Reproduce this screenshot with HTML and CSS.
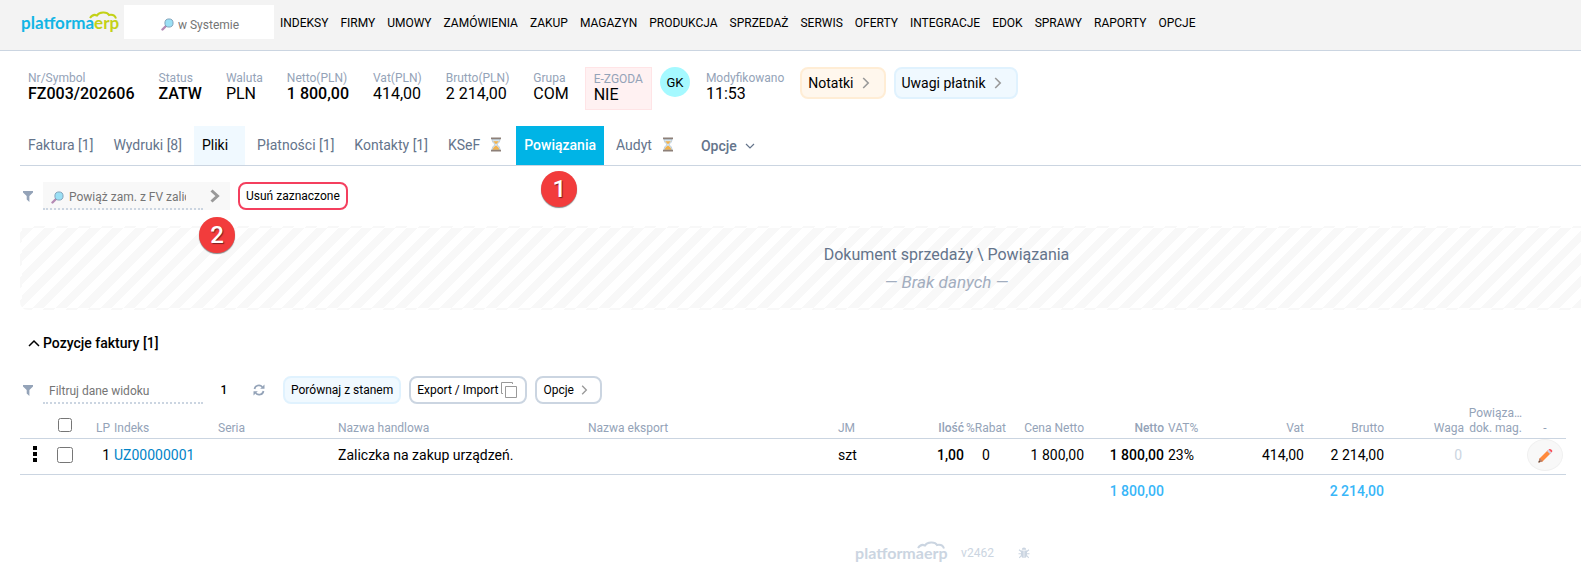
FILE: index.html
```html
<!DOCTYPE html>
<html lang="pl">
<head>
  <meta charset="utf-8">
  <title>FZ003/202606 - platformaerp</title>
  <meta name="viewport" content="width=device-width, initial-scale=1">
  <link rel="stylesheet" href="styles.css">
</head>
<body>
<!-- Shared icons -->
<svg class="sprite" aria-hidden="true">
  <symbol id="icon-search" viewBox="0 0 14 14">
    <path d="M1.6 12.4L5.4 8.6" stroke="#b48ab4" stroke-width="2.6" stroke-linecap="round"/>
    <circle cx="8.6" cy="5.4" r="4.4" fill="#9be0f5" stroke="#7d9fb8" stroke-width="1"/>
  </symbol>
  <symbol id="icon-filter" viewBox="0 0 10 11">
    <path d="M0 0h10v1.4L6.4 5v6L3.7 8.6V5L0 1.4z" fill="#94a3b8"/>
  </symbol>
  <symbol id="icon-right" viewBox="0 0 8 12">
    <path d="M1.2 1l5 5-5 5" fill="none" stroke="currentColor" stroke-width="1.6"/>
  </symbol>
  <symbol id="icon-hourglass" viewBox="0 0 12 15">
    <path d="M2 2h8c0 3-1.6 4.200-3 5.500C8.400 8.800 10 10 10 13H2c0-3 1.600-4.200 3-5.500C3.600 6.200 2 5 2 2z" fill="#d3e3ee" stroke="#a9bccb" stroke-width=".6"/>
    <path d="M3.200 4.200h5.600L6 7.300zM6 8.400c2 1.400 3.200 2.600 3.300 4.400H2.700C2.800 11 4 9.800 6 8.400z" fill="#f2b24c"/>
    <path d="M1 .5h10v1.700H1zM1 12.800h10v1.700H1z" fill="#8d8078"/>
  </symbol>
</svg>

<header class="topbar">
  <a class="logo" href="#">
    <span>platforma<b>erp</b></span>
    <svg viewBox="0 0 28 10" aria-hidden="true"><path d="M1 7C3 4 6 3.500 8 4.500 10 .8 18 .2 20 4c3-.6 6 .4 7 3.500"/></svg>
  </a>
  <label class="system-search">
    <svg class="icon-search"><use href="#icon-search"/></svg>
    <input type="text" placeholder="w Systemie" aria-label="Szukaj w Systemie">
  </label>
  <nav class="menu">
    <a href="#">INDEKSY</a>
    <a href="#">FIRMY</a>
    <a href="#">UMOWY</a>
    <a href="#">ZAMÓWIENIA</a>
    <a href="#">ZAKUP</a>
    <a href="#">MAGAZYN</a>
    <a href="#">PRODUKCJA</a>
    <a href="#">SPRZEDAŻ</a>
    <a href="#">SERWIS</a>
    <a href="#">OFERTY</a>
    <a href="#">INTEGRACJE</a>
    <a href="#">EDOK</a>
    <a href="#">SPRAWY</a>
    <a href="#">RAPORTY</a>
    <a href="#">OPCJE</a>
  </nav>
</header>

<main>
  <section class="summary">
    <dl class="fields">
      <div><dt>Nr/Symbol</dt><dd class="strong">FZ003/202606</dd></div>
      <div><dt>Status</dt><dd class="strong">ZATW</dd></div>
      <div><dt>Waluta</dt><dd>PLN</dd></div>
      <div><dt>Netto(PLN)</dt><dd class="strong">1 800,00</dd></div>
      <div><dt>Vat(PLN)</dt><dd>414,00</dd></div>
      <div><dt>Brutto(PLN)</dt><dd>2 214,00</dd></div>
      <div><dt>Grupa</dt><dd>COM</dd></div>
    </dl>
    <dl class="consent"><dt>E-ZGODA</dt><dd>NIE</dd></dl>
    <span class="avatar">GK</span>
    <dl class="modified"><dt>Modyfikowano</dt><dd>11:53</dd></dl>
    <button type="button" class="pill pill-orange">Notatki <svg class="icon-right"><use href="#icon-right"/></svg></button>
    <button type="button" class="pill pill-blue">Uwagi płatnik <svg class="icon-right"><use href="#icon-right"/></svg></button>
  </section>

  <nav class="tabs">
    <a href="#">Faktura [1]</a>
    <a href="#">Wydruki [8]</a>
    <a href="#" class="files">Pliki</a>
    <a href="#">Płatności [1]</a>
    <a href="#">Kontakty [1]</a>
    <a href="#">KSeF <svg class="icon-hourglass"><use href="#icon-hourglass"/></svg></a>
    <a href="#" class="active">Powiązania<span class="marker marker-tab">1</span></a>
    <a href="#">Audyt <svg class="icon-hourglass"><use href="#icon-hourglass"/></svg></a>
    <button type="button">Opcje <svg class="icon-down" viewBox="0 0 10 6"><path d="M1 1l4 4 4-4" fill="none" stroke="currentColor" stroke-width="1.200"/></svg></button>
  </nav>

  <div class="toolbar toolbar-links">
    <svg class="icon-filter"><use href="#icon-filter"/></svg>
    <div class="link-search">
      <label>
        <svg class="icon-search"><use href="#icon-search"/></svg>
        <input type="text" placeholder="Powiąż zam. z FV zaliczkową" aria-label="Powiąż zam. z FV zaliczkową">
      </label>
      <button type="button" aria-label="Powiąż"><svg viewBox="0 0 10 14"><path d="M1.500 1.500L7.500 7l-6 5.500" fill="none" stroke="#999" stroke-width="3"/></svg></button>
      <span class="marker marker-search">2</span>
    </div>
    <button type="button" class="btn btn-red">Usuń zaznaczone</button>
  </div>

  <div class="empty">
    <p>Dokument sprzedaży \ Powiązania</p>
    <p class="none">— Brak danych —</p>
  </div>

  <h2><svg viewBox="0 0 12 8" aria-hidden="true"><path d="M1 7l5-5 5 5" fill="none" stroke="#000" stroke-width="1.500"/></svg>Pozycje faktury [1]</h2>

  <div class="toolbar toolbar-items">
    <svg class="icon-filter"><use href="#icon-filter"/></svg>
    <input class="filter" type="text" placeholder="Filtruj dane widoku" aria-label="Filtruj dane widoku">
    <span class="count">1</span>
    <button type="button" class="refresh" aria-label="Odśwież">
      <svg viewBox="0 0 12 12"><path d="M1.500 5A4.400 4.400 0 0 1 9.300 3M10.500 7A4.400 4.400 0 0 1 2.700 9" fill="none" stroke="#94a3b8" stroke-width="1.700"/><path d="M11.500.5v4.300H7.200zM.5 11.500V7.200h4.300z" fill="#94a3b8"/></svg>
    </button>
    <button type="button" class="btn btn-blue">Porównaj z stanem</button>
    <button type="button" class="btn btn-copy">Export / Import<svg viewBox="0 0 18 18"><path d="M5.500 5.500h11v11h-11zM3 12.500H1.500v-11h11V3" fill="none" stroke="#999"/></svg></button>
    <button type="button" class="btn">Opcje <svg class="icon-right"><use href="#icon-right"/></svg></button>
  </div>

  <table class="items">
    <colgroup>
      <col class="c-menu"><col class="c-check"><col class="c-lp"><col class="c-index"><col class="c-serial"><col class="c-name"><col class="c-name"><col class="c-unit"><col class="c-qty"><col class="c-discount"><col class="c-price"><col class="c-net"><col class="c-rate"><col class="c-vat"><col class="c-gross"><col class="c-weight"><col class="c-doc"><col class="c-edit">
    </colgroup>
    <thead>
      <tr>
        <th></th>
        <th class="check"><input type="checkbox" aria-label="Zaznacz wszystkie"></th>
        <th class="num">LP</th>
        <th>Indeks</th>
        <th>Seria</th>
        <th>Nazwa handlowa</th>
        <th>Nazwa eksport</th>
        <th>JM</th>
        <th class="num strong">Ilość</th>
        <th class="rebate">%Rabat</th>
        <th class="num">Cena Netto</th>
        <th class="num strong">Netto</th>
        <th>VAT%</th>
        <th class="num">Vat</th>
        <th class="num">Brutto</th>
        <th class="num">Waga</th>
        <th class="num">Powiąza… dok. mag.</th>
        <th class="mid">-</th>
      </tr>
    </thead>
    <tbody>
      <tr>
        <td class="mid"><button type="button" class="dots" aria-label="Menu pozycji"><svg viewBox="0 0 4 16"><path d="M0 0h4v4H0zM0 6h4v4H0zM0 12h4v4H0z"/></svg></button></td>
        <td class="check"><input type="checkbox" aria-label="Zaznacz pozycję 1"></td>
        <td class="num">1</td>
        <td><a href="#">UZ00000001</a></td>
        <td></td>
        <td>Zaliczka na zakup urządzeń.</td>
        <td></td>
        <td>szt</td>
        <td class="num strong">1,00</td>
        <td class="discount">0</td>
        <td class="num">1 800,00</td>
        <td class="num strong">1 800,00</td>
        <td>23%</td>
        <td class="num">414,00</td>
        <td class="num">2 214,00</td>
        <td class="num muted">0</td>
        <td></td>
        <td class="mid">
          <button type="button" class="edit" aria-label="Edytuj"><svg viewBox="0 0 15 15"><path d="M.5 14.500l1-4L10 2l3 3-8.500 8.500z" fill="#ff8a3d"/><path d="M.5 14.500l1-4 1.200.3.300 1.200 1.500.5v1z" fill="#b5806c"/><path d="M.5 14.500l.4-1.700 1.300 1.300z" fill="#333"/><path d="M9 3l1.500-1.500 3 3L12 6z" fill="#cfd0e6"/><path d="M10.500 1.500C12-.2 16 2.500 13.500 4.500z" fill="#f8505a"/></svg></button>
        </td>
      </tr>
    </tbody>
    <tfoot>
      <tr>
        <td colspan="11"></td>
        <td class="num">1 800,00</td>
        <td colspan="2"></td>
        <td class="num">2 214,00</td>
        <td colspan="3"></td>
      </tr>
    </tfoot>
  </table>
</main>

<footer>
  <a class="logo" href="#">
    <span>platforma<b>erp</b></span>
    <svg viewBox="0 0 28 10" aria-hidden="true"><path d="M1 7C3 4 6 3.500 8 4.500 10 .8 18 .2 20 4c3-.6 6 .4 7 3.500"/></svg>
  </a>
  <span>v2462</span>
  <a href="#" aria-label="Zgłoś błąd"><svg class="icon-bug" viewBox="0 0 12 12"><path d="M3.800 2.800a2.200 2.200 0 0 1 4.400 0zM3 3.500h2.700V11C4 11 3 9.500 3 8zM6.300 3.500H9V8c0 1.500-1 3-2.700 3z" fill="#cbd5e1"/><path d="M3.200 4.500L1 2.800M8.800 4.500L11 2.800M3 6.800H.5M9 6.800h2.500M3.300 8.500L1.300 10.800M8.700 8.500l2 2.300" stroke="#cbd5e1" stroke-width="1.100"/></svg></a>
</footer>
</body>
</html>
```
FILE: styles.css
```css
* {
  box-sizing: border-box;
}

body {
  margin: 0;
  font-family: Roboto, sans-serif;
  font-size: 14px;
  color: #000;
  background-color: #fff;
  overflow-x: hidden;
}

a {
  color: inherit;
  text-decoration: none;
}

button,
input {
  font-family: inherit;
  color: inherit;
}

button {
  padding: 0;
  border: none;
  background: none;
  cursor: pointer;
}

input::placeholder {
  color: #757575;
  opacity: 1;
}

dl,
dd,
p {
  margin: 0;
}

svg {
  flex: none;
}

.sprite {
  position: absolute;
  width: 0;
  height: 0;
}

.strong {
  font-weight: 500;
}

/* Icons */
.icon-search {
  width: 13px;
  height: 13px;
}

.icon-filter {
  width: 10px;
  height: 11px;
}

.icon-right {
  width: 8px;
  height: 12px;
  color: #999;
}

.icon-hourglass {
  width: 16px;
  height: 15px;
}

.icon-down {
  width: 10px;
  height: 6px;
}

.icon-bug {
  display: block;
  width: 12px;
  height: 12px;
}

/* Top bar */
.topbar {
  display: flex;
  align-items: flex-start;
  height: 51px;
  padding: 5px 0 0 21px;
  background-color: #f3f3f3;
  border-bottom: 1px solid #cbd5e1;
}

.logo {
  position: relative;
  width: 96px;
  font-family: Lato, sans-serif;
  font-size: 17px;
  font-weight: 700;
  line-height: 24px;
  color: #12b5e5;
}

.logo b {
  font-weight: 700;
  color: #c3d117;
}

.logo svg {
  position: absolute;
  top: 0;
  right: 0;
  width: 28px;
  height: 10px;
  fill: none;
  stroke: #c3d117;
  stroke-width: 2;
}

.topbar .logo {
  margin: 6px 7px 0 0;
}

.system-search {
  display: flex;
  align-items: center;
  gap: 4px;
  width: 150px;
  height: 34px;
  padding: 5px 0 0 37px;
  background-color: #fff;
}

.system-search input {
  width: 90px;
  padding: 0;
  border: none;
  font-size: 12px;
}

.menu {
  display: flex;
  gap: 12px;
  padding: 8px 0 0 6px;
  font-size: 12px;
  line-height: 20px;
}

/* Document summary */
main {
  padding-left: 20px;
}

.summary {
  display: flex;
  align-items: flex-start;
  padding: 16px 0 0 8px;
}

.fields {
  display: flex;
  gap: 24px;
}

.summary dt {
  font-size: 12px;
  line-height: 15px;
  color: #94a3b8;
}

.summary dd {
  font-size: 16px;
  line-height: 15px;
}

.fields,
.modified {
  padding-top: 4px;
}

.consent {
  height: 43px;
  margin: 0 8px 0 16px;
  padding: 4px 8px;
  background-color: #fff1f2;
  border: 1px solid #ffe4e6;
}

.avatar {
  width: 30px;
  height: 30px;
  margin-right: 16px;
  border-radius: 50%;
  background-color: #a5f9ff;
  font-size: 13px;
  line-height: 31px;
  text-align: center;
}

.pill {
  display: flex;
  align-items: center;
  gap: 8px;
  height: 32px;
  padding: 0 14px 0 6px;
  border: 2px solid #e0f2fe;
  border-radius: 8px;
  font-size: 14px;
}

.pill-orange {
  margin: 0 8px 0 16px;
  background-color: #fff7ed;
  border-color: #ffedd5;
}

.pill-blue {
  background-color: #f0f9ff;
}

/* Tabs */
.tabs {
  display: flex;
  height: 40px;
  margin-top: 16px;
  border-bottom: 1px solid #cbd5e1;
  color: #64748b;
}

.tabs a {
  display: flex;
  align-items: center;
  gap: 8px;
  margin-right: 4px;
  padding: 0 8px 2px;
}

.tabs .files {
  padding-right: 17px;
  background-color: #f0f9ff;
  color: #000;
}

.tabs .active {
  position: relative;
  background-color: #00b4e6;
  color: #fff;
  font-weight: 500;
}

.tabs button {
  display: flex;
  align-items: center;
  gap: 8px;
  margin-left: 13px;
  font-size: 14px;
  font-weight: 500;
}

/* Numbered step markers */
.marker {
  position: absolute;
  z-index: 1;
  width: 36px;
  height: 36px;
  border-radius: 50%;
  background-color: #f23c3c;
  box-shadow: 0 1px 1px #888;
  color: #fff;
  font-size: 24px;
  font-weight: 500;
  line-height: 36px;
  text-align: center;
  text-shadow: 1px 1px 1px #7a2020;
}

.marker-tab {
  top: 45px;
  left: 25px;
}

.marker-search {
  top: 35px;
  right: -5px;
}

/* Toolbars */
.toolbar {
  display: flex;
  align-items: center;
  padding-left: 3px;
}

.toolbar .icon-filter {
  margin-right: 10px;
}

.toolbar-links {
  margin-top: 16px;
}

.link-search {
  position: relative;
  display: flex;
  width: 187px;
  height: 28px;
  margin-right: 8px;
  background-color: #f8f8f8;
}

.link-search label {
  display: flex;
  align-items: center;
  gap: 5px;
  width: 160px;
  padding: 4px 17px 0 8px;
  border-bottom: 2px dotted #cbd5e1;
}

.link-search input {
  width: 100%;
  min-width: 0;
  padding: 0;
  border: none;
  background: none;
  font-size: 12px;
}

.link-search button {
  margin-left: 6px;
}

.link-search button svg {
  display: block;
  width: 12px;
  height: 14px;
}

.btn {
  display: flex;
  align-items: center;
  gap: 7px;
  height: 28px;
  margin-right: 8px;
  padding: 0 6px;
  border: 2px solid #cbd5e1;
  border-radius: 8px;
  font-size: 12px;
}

.btn-red {
  border-color: #f43f5e;
}

.btn-blue {
  background-color: #f0f9ff;
  border-color: #e0f2fe;
}

.btn-copy {
  gap: 2px;
  padding-right: 7px;
}

.btn-copy svg {
  width: 18px;
  height: 18px;
}

.btn .icon-right {
  width: 7px;
  height: 10px;
  margin-right: 6px;
}

/* Empty list placeholder */
.empty {
  height: 84px;
  margin-top: 16px;
  padding: 15px 0 0 290px;
  border: 2px solid transparent;
  border-right: none;
  border-radius: 8px 0 0 8px;
  background-image: repeating-linear-gradient(135deg, #f8f8f8 0 8px, #fff 8px 16px);
  font-size: 16px;
  line-height: 24px;
  text-align: center;
  color: #64748b;
}

.empty .none {
  margin-top: 3px;
  font-size: 17px;
  font-style: italic;
  color: #a3aebf;
}

h2 {
  display: flex;
  align-items: center;
  gap: 3px;
  margin: 23px 0 0 8px;
  font-size: 14px;
  font-weight: 500;
  line-height: 20px;
}

h2 svg {
  width: 12px;
  height: 8px;
}

.toolbar-items {
  margin-top: 23px;
}

.filter {
  width: 160px;
  height: 28px;
  padding: 4px 6px 0;
  border: none;
  border-bottom: 2px dotted #cbd5e1;
  font-size: 12px;
}

.count {
  width: 42px;
  font-size: 12px;
  font-weight: 500;
  text-align: center;
}

.refresh {
  width: 28px;
  margin-right: 10px;
}

.refresh svg {
  display: block;
  width: 12px;
  height: 12px;
  margin: 0 auto;
}

/* Invoice items */
.items {
  width: calc(100% - 15px);
  border-collapse: collapse;
  table-layout: fixed;
}

.items th,
.items td {
  padding: 0 2px;
  text-align: left;
  white-space: nowrap;
}

.items th {
  height: 34px;
  padding-bottom: 2px;
  font-size: 12px;
  font-weight: 400;
  line-height: 15px;
  vertical-align: bottom;
  white-space: normal;
  color: #94a3b8;
}

.items th.strong {
  font-weight: 500;
}

.items thead tr,
.items tbody tr {
  border-bottom: 1px solid #cbd5e1;
}

.items tbody td {
  height: 36px;
  padding-bottom: 2px;
}

.items tbody a {
  color: #0284c7;
}

.items tfoot td {
  height: 34px;
  font-weight: 500;
  color: #38b6f8;
}

.items .num {
  text-align: right;
}

.items .mid,
.items .check {
  text-align: center;
}

.items .rebate {
  padding-left: 0;
}

.items .discount {
  padding-left: 16px;
}

.items .muted {
  padding-right: 4px;
  color: #cbd5e1;
}

.items input {
  display: block;
  width: 16px;
  height: 16px;
  margin: 0 auto;
}

.items th input {
  width: 14px;
  height: 14px;
  margin-bottom: 4px;
}

.c-menu { width: 30px; }
.c-check { width: 30px; }
.c-lp { width: 32px; }
.c-index { width: 104px; }
.c-serial { width: 120px; }
.c-unit { width: 64px; }
.c-qty { width: 66px; }
.c-discount { width: 42px; }
.c-price { width: 78px; }
.c-net { width: 80px; }
.c-rate { width: 62px; }
.c-vat { width: 78px; }
.c-gross { width: 80px; }
.c-weight { width: 80px; }
.c-doc { width: 58px; }
.c-edit { width: 42px; }

.dots svg {
  display: block;
  width: 4px;
  height: 16px;
}

.edit {
  display: block;
  width: 36px;
  height: 32px;
  margin: 0 auto;
  border: 1px solid #f0f0f0;
  border-radius: 50%;
  background-color: #f8f8f8;
}

.edit svg {
  display: block;
  width: 15px;
  height: 15px;
  margin: 0 auto;
}

/* Footer */
footer {
  display: flex;
  align-items: center;
  justify-content: center;
  padding: 33px 0 0 304px;
  font-size: 12px;
  color: #cbd5e1;
}

footer .logo {
  width: 90px;
  margin-right: 16px;
  font-size: 16px;
}

footer .logo,
footer .logo b {
  color: #cbd5e1;
}

footer .logo svg {
  stroke: #cbd5e1;
}

footer > span {
  margin-right: 24px;
}
```
